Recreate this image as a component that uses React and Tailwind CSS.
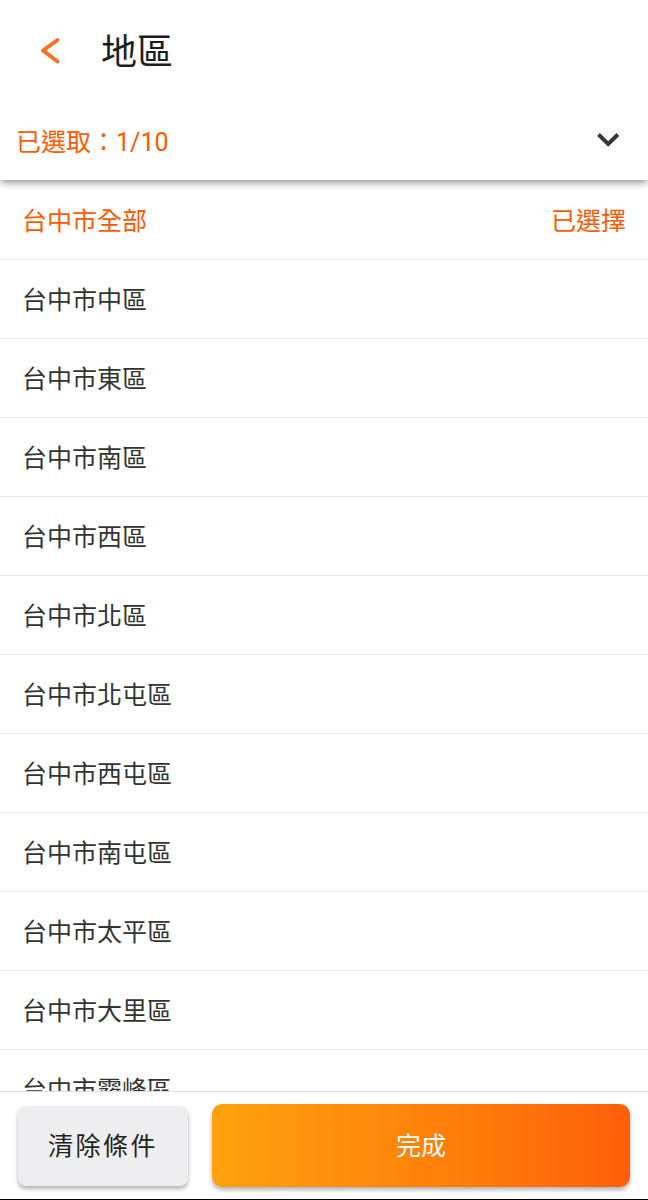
import { useState } from 'react';

const MAX_SELECTED = 10;

const ALL = '台中市全部';

const districts = [
  ALL,
  '台中市中區',
  '台中市東區',
  '台中市南區',
  '台中市西區',
  '台中市北區',
  '台中市北屯區',
  '台中市西屯區',
  '台中市南屯區',
  '台中市太平區',
  '台中市大里區',
  '台中市霧峰區',
];

function App() {
  const [selected, setSelected] = useState([ALL]);

  const toggle = (name) => {
    setSelected(prev => {
      if (prev.includes(name)) return prev.filter(item => item !== name);
      return prev.length < MAX_SELECTED ? [...prev, name] : prev;
    });
  };

  return (
    <div
      lang="zh-Hant"
      className="flex h-screen w-full flex-col bg-white font-['Roboto','Noto_Sans_CJK_TC',sans-serif] text-[25px] leading-[38px] text-[#333333]"
    >
      {/* Title bar and selection summary */}
      <header className="z-10 shrink-0 bg-white shadow-[0_4px_7px_-1px_rgba(0,0,0,0.4)]">
        <div className="flex h-[102px] items-center gap-7 pl-[25px]">
          <button type="button" aria-label="返回" className="flex size-12 cursor-pointer items-center justify-center">
            <svg viewBox="0 0 48 48" className="size-12" fill="none" stroke="#fb6f22" strokeWidth="4" strokeLinecap="round" strokeLinejoin="round" aria-hidden="true">
              <path d="M32.500 13 18 23.500l14.500 11" />
            </svg>
          </button>
          <h1 className="pt-1 text-[36px] leading-[48px] text-[#1c1c1e]">地區</h1>
        </div>

        <button type="button" className="flex h-[78px] w-full cursor-pointer items-center justify-between pr-6 pl-4 text-[#ff5a00]">
          <span className="pt-1">已選取：{selected.length}/{MAX_SELECTED}</span>
          <svg viewBox="0 0 32 32" className="size-8" fill="none" stroke="#37373a" strokeWidth="4" aria-hidden="true">
            <path d="m6.500 9.500 9.700 9.500 9.700-9.500" />
          </svg>
        </button>
      </header>

      <main className="min-h-0 flex-1 overflow-y-auto pt-px [scrollbar-width:none]">
        <ul>
          {districts.map(name => {
            const active = selected.includes(name);
            return (
              <li key={name} className="border-b border-[#e9e9eb]">
                <button
                  type="button"
                  aria-pressed={active}
                  onClick={() => toggle(name)}
                  className={`flex h-[78px] w-full cursor-pointer items-center justify-between px-[22px] pt-1 ${active ? 'text-[#ff5a00]' : 'text-[#333333]'}`}
                >
                  <span>{name}</span>
                  {active && <span>已選擇</span>}
                </button>
              </li>
            );
          })}
        </ul>
      </main>

      {/* Actions */}
      <footer className="flex shrink-0 items-center gap-6 border-t border-b border-t-[#dcdcde] border-b-black bg-white px-[18px] py-3">
        <button
          type="button"
          onClick={() => setSelected([])}
          className="h-20 w-[170px] shrink-0 cursor-pointer rounded-lg bg-[#eeeef0] pt-0.5 tracking-widest text-[#222222] shadow-[0_3px_4px_rgba(0,0,0,0.3)]"
        >
          清除條件
        </button>
        <button
          type="button"
          className="h-[83px] flex-1 cursor-pointer rounded-[10px] bg-linear-to-r from-[#ffa20d] to-[#fd5f08] pt-0.5 text-white shadow-[0_3px_4px_rgba(0,0,0,0.3)]"
        >
          完成
        </button>
      </footer>
    </div>
  );
}

export default App;
